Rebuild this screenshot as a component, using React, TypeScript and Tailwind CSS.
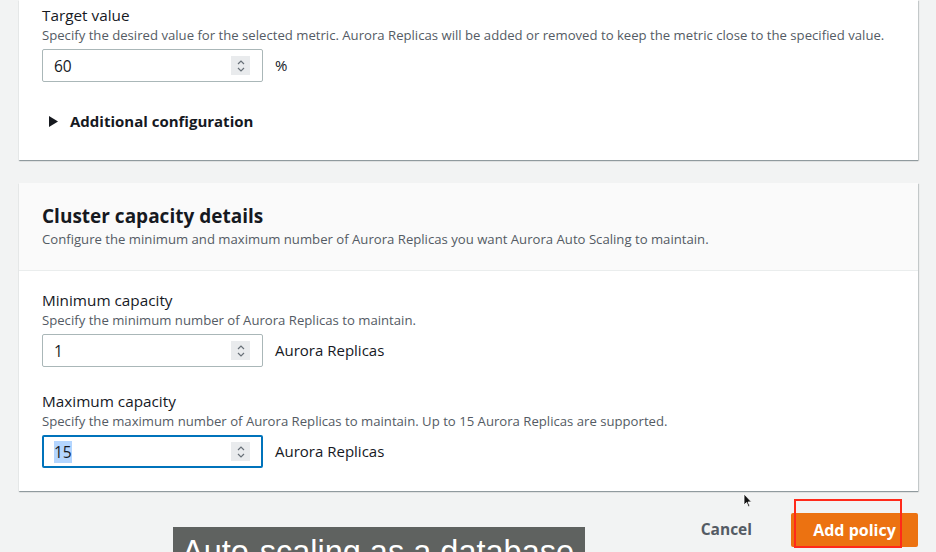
const font = { fontFamily: '"Open Sans", "Noto Sans", Arial, sans-serif' }

function Spinner() {
  return (
    <div className="w-[19px] h-[19px] bg-[#e9ebed] flex items-center justify-center">
      <svg width="10" height="14" viewBox="0 0 10 14" fill="none" stroke="#687078" strokeWidth="1.2">
        <path d="M2 5 L5 2 L8 5" />
        <path d="M2 9 L5 12 L8 9" />
      </svg>
    </div>
  )
}

function NumberInput({ value, unit, focused }: { value: string; unit: string; focused?: boolean }) {
  return (
    <div className="flex items-center gap-[12px]">
      <div
        className={
          focused
            ? 'w-[221px] h-[33px] border-2 border-[#0073bb] rounded-[2px] bg-white flex items-center justify-between pl-[10px] pr-[11px]'
            : 'w-[221px] h-[33px] border border-[#aab7b8] rounded-[2px] bg-white flex items-center justify-between pl-[11px] pr-[12px]'
        }
      >
        <span className={focused ? 'text-[15.5px] text-[#16191f] bg-[#b4d5fe] leading-[22px]' : 'text-[15.5px] text-[#16191f] leading-[22px]'}>
          {value}
        </span>
        <Spinner />
      </div>
      <span className="text-[15px] text-[#16191f]">{unit}</span>
    </div>
  )
}

function Field({ label, hint, children }: { label: string; hint: string; children: React.ReactNode }) {
  return (
    <div className="flex flex-col">
      <div className="text-[15.3px] leading-[20px] text-[#16191f]">{label}</div>
      <div className="text-[13.15px] leading-[20px] text-[#545b64] mb-[4px]">{hint}</div>
      {children}
    </div>
  )
}

export default function App() {
  return (
    <div className="relative w-[936px] h-[552px] bg-[#f2f3f3] overflow-hidden" style={font}>
      <div className="mx-[19px] w-[899px] bg-white shadow-[0_1px_1px_0_rgba(0,28,36,0.3),1px_1px_1px_0_rgba(0,28,36,0.15)] pt-[5px] px-[23px] h-[160px]">
        <Field label="Target value" hint="Specify the desired value for the selected metric. Aurora Replicas will be added or removed to keep the metric close to the specified value.">
          <NumberInput value="60" unit="%" />
        </Field>
        <div className="flex items-center gap-[12px] mt-[28px] pl-[7px]">
          <svg width="9" height="11" viewBox="0 0 9 11">
            <path d="M0 0 L9 5.5 L0 11 Z" fill="#16191f" />
          </svg>
          <span className="text-[15px] font-bold text-[#16191f]">Additional configuration</span>
        </div>
      </div>

      <div className="mx-[19px] mt-[23px] w-[899px] bg-white shadow-[0_1px_1px_0_rgba(0,28,36,0.3),1px_1px_1px_0_rgba(0,28,36,0.15)] h-[308px]">
        <div className="bg-[#fafafa] border-b border-[#eaeded] h-[88px] px-[23px] pt-[20px]">
          <div className="text-[19px] leading-[26px] font-bold text-[#16191f]">Cluster capacity details</div>
          <div className="text-[13.15px] leading-[20px] text-[#545b64]">
            Configure the minimum and maximum number of Aurora Replicas you want Aurora Auto Scaling to maintain.
          </div>
        </div>
        <div className="px-[23px] pt-[19px] flex flex-col gap-[24px]">
          <Field label="Minimum capacity" hint="Specify the minimum number of Aurora Replicas to maintain.">
            <NumberInput value="1" unit="Aurora Replicas" />
          </Field>
          <Field label="Maximum capacity" hint="Specify the maximum number of Aurora Replicas to maintain. Up to 15 Aurora Replicas are supported.">
            <NumberInput value="15" unit="Aurora Replicas" focused />
          </Field>
        </div>
      </div>

      <div className="flex justify-end items-center gap-[39px] pr-[18px] mt-[22px]">
        <span className="text-[15.5px] font-bold text-[#545b64]">Cancel</span>
        <div className="w-[127px] h-[34px] bg-[#ec7211] rounded-[2px] flex items-center justify-center text-[16px] font-bold text-white">
          Add policy
        </div>
      </div>

      <div className="absolute left-[794px] top-[499px] w-[108px] h-[49px] border-2 border-[#ff2a1a]" />

      <svg className="absolute left-[743px] top-[493px]" width="10" height="15" viewBox="0 0 10 15">
        <path d="M1 1 L1 12 L3.5 9.5 L5.5 14 L7 13.3 L5 9 L8.5 9 Z" fill="#111" stroke="#fff" strokeWidth="0.8" />
      </svg>

      <div
        className="absolute left-[173px] top-[527px] w-[412px] h-[40px] bg-[#5f6260] text-white text-[32.5px] leading-[40px] pl-[9px] pt-[5px] whitespace-nowrap"
        style={{ fontFamily: '"Liberation Sans", Arial, sans-serif' }}
      >
        Auto-scaling as a database
      </div>
    </div>
  )
}
